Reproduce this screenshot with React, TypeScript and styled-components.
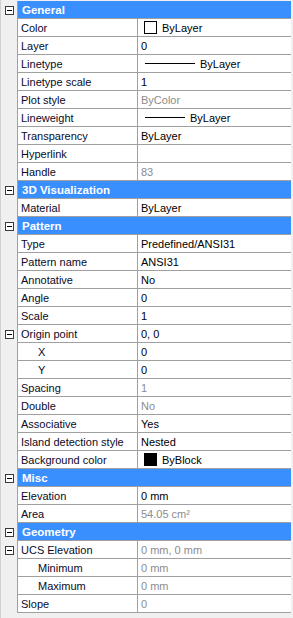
import React from 'react';
import styled, { createGlobalStyle } from 'styled-components';

const GlobalStyle = createGlobalStyle`
  html, body {
    margin: 0;
    padding: 0;
    background: #f0f0f0;
  }
  body {
    font-family: 'Liberation Sans', Arial, sans-serif;
    font-size: 11px;
  }
`;

const Panel = styled.div`
  width: 293px;
  height: 618px;
  box-sizing: border-box;
  padding-top: 1px;
  background: #f0f0f0;
  border-left: 1px solid #d0d0d0;
  overflow: hidden;
`;

const Row = styled.div`
  display: grid;
  grid-template-columns: 16px 120px 154px;
  height: 18px;
`;

const Gutter = styled.div`
  display: flex;
  align-items: center;
  justify-content: center;
`;

const Toggle = styled.div`
  width: 9px;
  height: 9px;
  box-sizing: border-box;
  border: 1px solid #3a3a3a;
  background: #fff;
  position: relative;

  &::after {
    content: '';
    position: absolute;
    left: 1px;
    right: 1px;
    top: 3px;
    height: 1px;
    background: #000;
  }
`;

const HeaderCell = styled.div`
  grid-column: 2 / 4;
  background: #3a8fff;
  color: #fff;
  font-weight: bold;
  font-size: 11.5px;
  display: flex;
  align-items: center;
  padding-left: 4px;
  border-left: 1px solid #a0a0a0;
  border-bottom: 1px solid #a0a0a0;
`;

const Cell = styled.div<{ $indent?: boolean; $muted?: boolean }>`
  background: #fff;
  display: flex;
  align-items: center;
  gap: 5px;
  padding-left: ${(p) => (p.$indent ? '20px' : '3px')};
  border-left: 1px solid #a0a0a0;
  border-bottom: 1px solid #a0a0a0;
  color: ${(p) => (p.$muted ? '#8c8c8c' : '#000')};
  white-space: nowrap;
  overflow: hidden;
`;

const Label = styled(Cell)`
  color: #0a0a28;
`;

const Swatch = styled.span<{ $fill: string }>`
  width: 13px;
  height: 13px;
  box-sizing: border-box;
  border: 1px solid #000;
  background: ${(p) => p.$fill};
  margin-left: 3px;
  flex-shrink: 0;
`;

const LineSample = styled.span<{ $w: number }>`
  width: ${(p) => p.$w}px;
  height: 1px;
  background: #000;
  margin-left: 4px;
  margin-right: 0;
  flex-shrink: 0;
`;

type Item =
  | { kind: 'header'; title: string }
  | {
      kind: 'prop';
      label: string;
      value: string;
      muted?: boolean;
      indent?: boolean;
      toggle?: boolean;
      swatch?: string;
      line?: number;
    };

const h = (title: string): Item => ({ kind: 'header', title });
const p = (label: string, value: string, extra: Partial<Extract<Item, { kind: 'prop' }>> = {}): Item => ({
  kind: 'prop',
  label,
  value,
  ...extra,
});

const items: Item[] = [
  h('General'),
  p('Color', 'ByLayer', { swatch: '#fff' }),
  p('Layer', '0'),
  p('Linetype', 'ByLayer', { line: 50 }),
  p('Linetype scale', '1'),
  p('Plot style', 'ByColor', { muted: true }),
  p('Lineweight', 'ByLayer', { line: 40 }),
  p('Transparency', 'ByLayer'),
  p('Hyperlink', ''),
  p('Handle', '83', { muted: true }),
  h('3D Visualization'),
  p('Material', 'ByLayer'),
  h('Pattern'),
  p('Type', 'Predefined/ANSI31'),
  p('Pattern name', 'ANSI31'),
  p('Annotative', 'No'),
  p('Angle', '0'),
  p('Scale', '1'),
  p('Origin point', '0, 0', { toggle: true }),
  p('X', '0', { indent: true }),
  p('Y', '0', { indent: true }),
  p('Spacing', '1', { muted: true }),
  p('Double', 'No', { muted: true }),
  p('Associative', 'Yes'),
  p('Island detection style', 'Nested'),
  p('Background color', 'ByBlock', { swatch: '#000' }),
  h('Misc'),
  p('Elevation', '0 mm'),
  p('Area', '54.05 cm²', { muted: true }),
  h('Geometry'),
  p('UCS Elevation', '0 mm, 0 mm', { toggle: true, muted: true }),
  p('Minimum', '0 mm', { indent: true, muted: true }),
  p('Maximum', '0 mm', { indent: true, muted: true }),
  p('Slope', '0', { muted: true }),
];

const App: React.FC = () => {
  return (
    <>
      <GlobalStyle />
      <Panel>
        {items.map((item, i) =>
          item.kind === 'header' ? (
            <Row key={i}>
              <Gutter>
                <Toggle />
              </Gutter>
              <HeaderCell>{item.title}</HeaderCell>
            </Row>
          ) : (
            <Row key={i}>
              <Gutter>{item.toggle && <Toggle />}</Gutter>
              <Label $indent={item.indent}>{item.label}</Label>
              <Cell $muted={item.muted}>
                {item.swatch && <Swatch $fill={item.swatch} />}
                {item.line && <LineSample $w={item.line} />}
                {item.value}
              </Cell>
            </Row>
          )
        )}
      </Panel>
    </>
  );
};

export default App;
